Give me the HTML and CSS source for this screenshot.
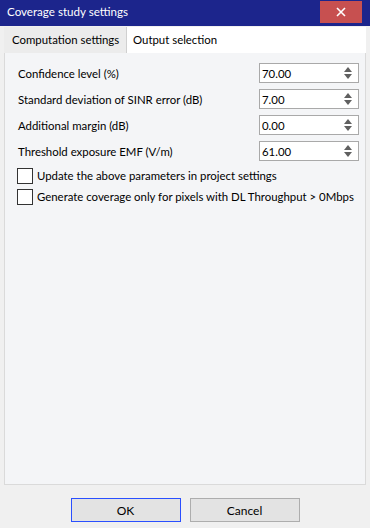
FILE: index.html
```html
<!DOCTYPE html>
<html lang="en">
<head>
    <meta charset="UTF-8">
    <meta name="viewport" content="width=device-width, initial-scale=1.0">
    <title>Coverage study settings</title>
    <link rel="stylesheet" href="styles.css">
</head>
<body>
    <div class="dialog">
        <div class="title-bar">
            <span class="title">Coverage study settings</span>
            <div class="close-btn">
                <svg width="10" height="10" viewBox="0 0 10 10">
                    <path d="M1 1 L9 9 M9 1 L1 9" stroke="#fff" stroke-width="1.6"/>
                </svg>
            </div>
        </div>

        <div class="tabs">
            <div class="tab tab-active">Computation settings</div>
            <div class="tab">Output selection</div>
        </div>

        <div class="panel">
            <div class="field">
                <label>Confidence level (%)</label>
                <div class="spin"><span>70.00</span><i class="arrows"></i></div>
            </div>
            <div class="field">
                <label>Standard deviation of SINR error (dB)</label>
                <div class="spin"><span>7.00</span><i class="arrows"></i></div>
            </div>
            <div class="field">
                <label>Additional margin (dB)</label>
                <div class="spin"><span>0.00</span><i class="arrows"></i></div>
            </div>
            <div class="field">
                <label>Threshold exposure EMF (V/m)</label>
                <div class="spin"><span>61.00</span><i class="arrows"></i></div>
            </div>

            <div class="check first"><span class="box"></span>Update the above parameters in project settings</div>
            <div class="check"><span class="box"></span>Generate coverage only for pixels with DL Throughput &gt; 0Mbps</div>
        </div>

        <div class="buttons">
            <button class="btn btn-default">OK</button>
            <button class="btn">Cancel</button>
        </div>
    </div>
</body>
</html>
```

FILE: styles.css
```css
body {
    margin: 0;
    font-family: Lato, "Noto Sans", sans-serif;
    font-size: 11.4px;
    color: #000;
    background-color: #f0f0f0;
}

.dialog {
    width: 370px;
    height: 528px;
    display: flex;
    flex-direction: column;
}

.title-bar {
    height: 26px;
    background-color: #1c258c;
    display: flex;
    align-items: flex-start;
    justify-content: space-between;
    flex-shrink: 0;
}

.title {
    color: #fff;
    padding: 5px 0 0 7px;
    font-size: 11.6px;
}

.close-btn {
    width: 42px;
    height: 22px;
    margin: 1px 8px 0 0;
    background-color: #c75050;
    display: flex;
    align-items: center;
    justify-content: center;
}

.tabs {
    margin: 1px 4px 0 4px;
    height: 26px;
    background-color: #fff;
    display: flex;
    flex-shrink: 0;
    white-space: nowrap;
}

.tab {
    padding: 0 6px 0 6px;
    line-height: 26px;
    background-color: #fff;
}

.tab-active {
    width: 123px;
    box-sizing: border-box;
    background-color: #ececec;
    border-right: 1px solid #d0d0d0;
    padding: 0 0 0 8px;
}

.panel {
    flex: 1;
    margin: 0 4px;
    background-color: #f4f5f7;
    border: 1px solid #dadada;
    border-top: none;
    padding: 7px 6px 0 13px;
}

.field {
    display: flex;
    align-items: center;
    justify-content: space-between;
    height: 26px;
}

.spin {
    width: 96px;
    height: 18px;
    background-color: #fff;
    border: 1px solid #a9a9a9;
    display: flex;
    align-items: center;
    justify-content: space-between;
    padding-left: 2px;
    box-sizing: content-box;
}

.arrows {
    position: relative;
    width: 9px;
    height: 14px;
    margin-right: 5px;
}

.arrows::before,
.arrows::after {
    content: "";
    position: absolute;
    left: 0;
    border-left: 4.5px solid transparent;
    border-right: 4.5px solid transparent;
}

.arrows::before {
    top: 1px;
    border-bottom: 5px solid #606060;
}

.arrows::after {
    bottom: 1px;
    border-top: 5px solid #606060;
}

.check {
    display: flex;
    align-items: center;
    height: 21px;
    margin-left: -1px;
    white-space: nowrap;
}

.check.first {
    margin-top: 1px;
}

.box {
    width: 14px;
    height: 14px;
    border: 1px solid #333;
    background-color: #fff;
    margin-right: 4px;
    flex-shrink: 0;
}

.buttons {
    height: 43px;
    display: flex;
    justify-content: center;
    align-items: flex-start;
    gap: 9px;
    padding-top: 13px;
    box-sizing: border-box;
    flex-shrink: 0;
}

.btn {
    width: 110px;
    height: 24px;
    font-family: Lato, "Noto Sans", sans-serif;
    font-size: 12px;
    background-color: #e3e3e3;
    border: 1px solid #adadad;
    padding: 0;
}

.btn-default {
    border-color: #2a4fff;
}
```
